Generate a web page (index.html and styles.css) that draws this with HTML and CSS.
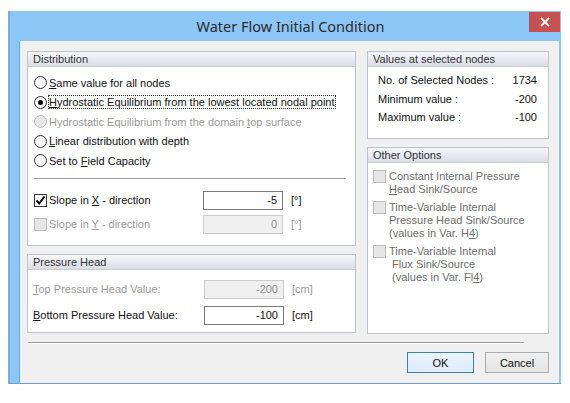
FILE: index.html
```html
<!DOCTYPE html>
<html lang="en">

<head>
    <meta charset="UTF-8">
    <title>Water Flow Initial Condition</title>
    <link rel="stylesheet" href="styles.css">
</head>

<body>
    <div class="window">
        <div class="titlebar">
            <span></span>
            <div class="title">Water Flow Initial Condition</div>
            <button class="close">
                <svg width="10" height="10" viewBox="0 0 10 10">
                    <path d="M1 1 L9 9 M9 1 L1 9" stroke="white" stroke-width="1.8" />
                </svg>
            </button>
        </div>

        <div class="client">
            <div class="columns">
                <div class="col-left">
                    <div class="panel distribution">
                        <div class="panel-head">Distribution</div>
                        <div class="panel-body">
                            <div class="radio-row"><span class="radio"></span><span><u>S</u>ame value for all nodes</span></div>
                            <div class="radio-row"><span class="radio checked"></span><span class="focus"><u>H</u>ydrostatic Equilibrium from the lowest located nodal point</span></div>
                            <div class="radio-row disabled"><span class="radio"></span><span>Hydrostatic Equilibrium from the domain <u>t</u>op surface</span></div>
                            <div class="radio-row"><span class="radio"></span><span><u>L</u>inear distribution with depth</span></div>
                            <div class="radio-row"><span class="radio"></span><span>Set to <u>F</u>ield Capacity</span></div>

                            <div class="sep"></div>

                            <div class="field-row slope-x">
                                <span class="check checked">
                                    <svg width="11" height="11" viewBox="0 0 11 11">
                                        <path d="M1.5 5.5 L4.2 8.5 L9.5 1.5" fill="none" stroke="black" stroke-width="2" />
                                    </svg>
                                </span>
                                <span class="label">Slope in <u>X</u> - direction</span>
                                <span class="input">-5</span>
                                <span class="unit">[°]</span>
                            </div>
                            <div class="field-row slope-y disabled">
                                <span class="check"></span>
                                <span class="label">Slope in <u>Y</u> - direction</span>
                                <span class="input">0</span>
                                <span class="unit">[°]</span>
                            </div>
                        </div>
                    </div>

                    <div class="panel pressure">
                        <div class="panel-head">Pressure Head</div>
                        <div class="panel-body">
                            <div class="field-row disabled">
                                <span class="label wide"><u>T</u>op Pressure Head Value:</span>
                                <span class="input">-200</span>
                                <span class="unit">[cm]</span>
                            </div>
                            <div class="field-row">
                                <span class="label wide"><u>B</u>ottom Pressure Head Value:</span>
                                <span class="input">-100</span>
                                <span class="unit">[cm]</span>
                            </div>
                        </div>
                    </div>
                </div>

                <div class="col-right">
                    <div class="panel values">
                        <div class="panel-head">Values at selected nodes</div>
                        <div class="panel-body">
                            <div class="value-row"><span>No. of Selected Nodes :</span><span>1734</span></div>
                            <div class="value-row"><span>Minimum value :</span><span>-200</span></div>
                            <div class="value-row"><span>Maximum value :</span><span>-100</span></div>
                        </div>
                    </div>

                    <div class="panel options">
                        <div class="panel-head">Other Options</div>
                        <div class="panel-body">
                            <div class="option"><span class="check"></span><span>Constant Internal Pressure<br><u>H</u>ead Sink/Source</span></div>
                            <div class="option"><span class="check"></span><span>Time-Variable Internal<br>Pressure Head Sink/Source<br>(values in Var. H<u>4</u>)</span></div>
                            <div class="option"><span class="check"></span><span>Time-Variable Internal<br>&nbsp;Flux Sink/Source<br>&nbsp;(values in Var. Fl<u>4</u>)</span></div>
                        </div>
                    </div>
                </div>
            </div>

            <div class="bottom-sep"></div>

            <div class="buttons">
                <button class="btn default">OK</button>
                <button class="btn">Cancel</button>
            </div>
        </div>
    </div>
</body>

</html>
```

FILE: styles.css
```css
body {
    margin: 0;
    padding: 0;
    background-color: white;
    font-family: "Liberation Sans", Arial, sans-serif;
    font-size: 11px;
    color: #111;
}

.window {
    width: 553px;
    margin: 11px 0 0 8px;
    background-color: #8cc6f7;
    border-left: 2px solid #76aee0;
    box-sizing: border-box;
    border-bottom: 1px solid #6e9ccb;
}

.titlebar {
    height: 30px;
    display: grid;
    grid-template-columns: 1fr auto 1fr;
    align-items: start;
}

.title {
    font-family: "Noto Sans", sans-serif;
    font-size: 14.5px;
    color: #2b2b2b;
    padding: 5px 0 0 10px;
}

.close {
    justify-self: end;
    width: 31px;
    height: 20px;
    margin: 1px 1px 0 0;
    border: none;
    padding: 0;
    background-color: #c75050;
    display: flex;
    align-items: center;
    justify-content: center;
}

.client {
    margin: 0 2px 0 9px;
    height: 342px;
    background-color: #f0f0f0;
    border-left: 1px solid #6fa6d8;
    box-sizing: border-box;
    display: flex;
    flex-direction: column;
    padding: 10px 10px 0 7px;
}

.columns {
    display: flex;
    gap: 11px;
}

.col-left {
    width: 329px;
    display: flex;
    flex-direction: column;
    gap: 8px;
}

.col-right {
    width: 182px;
    display: flex;
    flex-direction: column;
    gap: 8px;
}

.panel {
    background-color: white;
    border: 1px solid #bcc3d2;
    box-sizing: border-box;
}

.panel-head {
    height: 14px;
    line-height: 14px;
    padding-left: 5px;
    color: #333;
    background: linear-gradient(#f7f8fa, #dadde7);
    border-bottom: 1px solid #c9cdd8;
}

.distribution {
    height: 195px;
}

.distribution .panel-body {
    padding: 6px 6px 0 6px;
}

.pressure {
    height: 79px;
}

.pressure .panel-body {
    padding: 9px 6px 0 5px;
}

.values {
    height: 88px;
}

.values .panel-body {
    padding: 4px 11px 0 10px;
}

.options {
    height: 187px;
}

.options .panel-body {
    padding: 7px 5px 0 5px;
}

.radio-row {
    height: 19.5px;
    display: flex;
    align-items: center;
    gap: 2px;
}

.radio {
    width: 13px;
    height: 13px;
    box-sizing: border-box;
    border: 1px solid #333;
    border-radius: 50%;
    background: linear-gradient(#f4f4f4, white);
    display: flex;
    align-items: center;
    justify-content: center;
}

.radio.checked::after {
    content: "";
    width: 5px;
    height: 5px;
    border-radius: 50%;
    background-color: black;
}

.disabled {
    color: #9a9a9a;
}

.disabled .radio,
.disabled .check {
    border-color: #bcbcbc;
    background: #e6e6e6;
}

.focus {
    outline: 1px dotted #333;
    outline-offset: 0;
}

.sep {
    height: 1px;
    background-color: #a0a0a0;
    margin: 7px 3px 0 0;
}

.field-row {
    display: flex;
    align-items: center;
    gap: 2px;
}

.slope-x {
    margin-top: 12px;
    height: 19px;
}

.slope-y {
    margin-top: 5px;
    height: 19px;
}

.check {
    width: 13px;
    height: 13px;
    box-sizing: border-box;
    border: 1px solid #333;
    background: white;
    display: flex;
    align-items: center;
    justify-content: center;
    flex-shrink: 0;
}

.label {
    width: 152px;
}

.label.wide {
    width: 169px;
}

.input {
    width: 80px;
    height: 19px;
    box-sizing: border-box;
    border: 1px solid #7a7a7a;
    background: white;
    text-align: right;
    padding-right: 5px;
    line-height: 17px;
}

.disabled .input {
    border-color: #cccccc;
    background: #f0f0f0;
    color: #8c8c8c;
}

.unit {
    margin-left: 6px;
}

.pressure .field-row {
    height: 20px;
    margin-bottom: 6px;
}

.value-row {
    height: 18.5px;
    display: flex;
    justify-content: space-between;
    align-items: center;
}

.option {
    display: flex;
    align-items: flex-start;
    gap: 3px;
    color: #6d6d6d;
    line-height: 13px;
    margin-bottom: 5px;
}

.option .check {
    border-color: #bcbcbc;
    background: #e6e6e6;
}

.bottom-sep {
    height: 1px;
    background-color: #a0a0a0;
    border-bottom: 1px solid white;
    margin: 8px 25px 0 1px;
}

.buttons {
    display: flex;
    justify-content: flex-end;
    gap: 11px;
    margin-top: 8px;
}

.btn {
    width: 64px;
    height: 21px;
    font-family: "Liberation Sans", Arial, sans-serif;
    font-size: 11px;
    color: #111;
    border: 1px solid #acacac;
    background: linear-gradient(#f0f0f0, #e5e5e5);
    padding: 0;
}

.btn.default {
    width: 67px;
    border-color: #3c7fb1;
    background: linear-gradient(#ecf4fc, #dcecfc);
}
```
